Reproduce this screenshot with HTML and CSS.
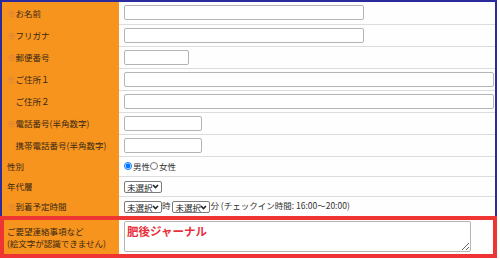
FILE: index.html
```html
<!DOCTYPE html>
<html lang="ja">
<head>
  <meta charset="UTF-8" />
  <meta name="viewport" content="width=device-width, initial-scale=1.0"/>
  <title>ご予約フォーム</title>
  <link rel="stylesheet" href="styles.css">
</head>
<body>

<div class="form">
  <div class="form-box">
    <table class="form-table">
      <tr>
        <th><span class="req">※</span>お名前</th>
        <td><input type="text" class="w-name"></td>
      </tr>
      <tr>
        <th><span class="req">※</span>フリガナ</th>
        <td><input type="text" class="w-name"></td>
      </tr>
      <tr>
        <th><span class="req">※</span>郵便番号</th>
        <td><input type="text" class="w-zip"></td>
      </tr>
      <tr>
        <th><span class="req">※</span>ご住所１</th>
        <td><input type="text" class="w-full"></td>
      </tr>
      <tr>
        <th><span class="indent">※</span>ご住所２</th>
        <td><input type="text" class="w-full"></td>
      </tr>
      <tr>
        <th><span class="req">※</span>電話番号(半角数字)</th>
        <td><input type="text" class="w-tel"></td>
      </tr>
      <tr>
        <th><span class="indent">※</span>携帯電話番号(半角数字)</th>
        <td><input type="text" class="w-tel"></td>
      </tr>
      <tr class="short">
        <th>性別</th>
        <td>
          <label class="radio"><input type="radio" name="sex" checked>男性</label><label class="radio"><input type="radio" name="sex">女性</label>
        </td>
      </tr>
      <tr class="short">
        <th>年代層</th>
        <td>
          <select><option>未選択</option></select>
        </td>
      </tr>
      <tr class="short last">
        <th><span class="req">※</span>到着予定時間</th>
        <td>
          <select><option>未選択</option></select>時 <select><option>未選択</option></select>分 (チェックイン時間: 16:00〜20:00)
        </td>
      </tr>
    </table>
  </div>

  <div class="note">
    <div class="note-label">ご要望連絡事項など<br>(絵文字が認識できません)</div>
    <div class="note-field">
      <textarea>肥後ジャーナル</textarea>
    </div>
  </div>
</div>

</body>
</html>
```

FILE: styles.css
```css
body {
  margin: 0;
  background: #fff;
  font-family: "Noto Sans CJK JP", "Noto Sans", sans-serif;
  font-size: 8.5px;
  color: #3a2814;
}
.form {
  width: 497px;
}
.form-box {
  border: 2px solid #2b2b9e;
  border-bottom: 0;
}
.form-table {
  width: 100%;
  border-collapse: collapse;
  table-layout: fixed;
}
.form-table tr {
  height: 22px;
}
.form-table tr.short {
  height: 20px;
}
.form-table th {
  width: 112px;
  background: #f7941d;
  text-align: left;
  font-weight: normal;
  padding: 0 0 0 5px;
  white-space: nowrap;
}
.form-table td {
  background: #fefefe;
  padding: 0 4px 0 5px;
  border-bottom: 1px solid #dcdcdc;
  color: #333;
  white-space: nowrap;
}
.form-table tr.last td {
  border-bottom: 0;
}
.req {
  color: #d27a55;
}
.indent {
  visibility: hidden;
}
input[type="text"] {
  display: block;
  box-sizing: border-box;
  height: 15px;
  margin: 0;
  border: 1px solid #b4b4b4;
  border-radius: 2px;
  background: #fff;
}
.w-name { width: 240px; }
.w-zip { width: 65px; }
.w-tel { width: 78px; }
.w-full { width: 370px; }
.radio {
  display: inline-flex;
  align-items: center;
}
.radio input {
  width: 8px;
  height: 8px;
  margin: 0 1px 0 0;
}
select {
  appearance: none;
  box-sizing: border-box;
  width: 38px;
  height: 12px;
  padding: 0 0 0 2px;
  margin: 0;
  border: 1px solid #7a7a7a;
  border-radius: 2px;
  background: #fff url("data:image/svg+xml,%3Csvg xmlns='http://www.w3.org/2000/svg' width='7' height='5' viewBox='0 0 7 5'%3E%3Cpath d='M1 1l2.5 2.5L6 1' fill='none' stroke='%23222' stroke-width='1.6'/%3E%3C/svg%3E") no-repeat right 2px center;
  font-family: inherit;
  font-size: 8.5px;
  line-height: 10px;
  color: #222;
  vertical-align: middle;
}
.note {
  display: flex;
  box-sizing: border-box;
  width: 497px;
  height: 42px;
  border: 4px solid #ef3434;
}
.note-label {
  width: 112px;
  flex: none;
  background: #f7941d;
  padding-left: 3px;
  display: flex;
  align-items: center;
  line-height: 12px;
}
.note-field {
  flex: 1;
  background: #fefefe;
  padding: 1px 0 0 5px;
}
.note-field textarea {
  display: block;
  box-sizing: border-box;
  width: 347px;
  height: 31px;
  margin: 0;
  padding: 1px 2px;
  border: 1px solid #b4b4b4;
  border-radius: 2px;
  resize: both;
  font-family: inherit;
  font-size: 11.5px;
  font-weight: bold;
  color: #e8303a;
}
```
